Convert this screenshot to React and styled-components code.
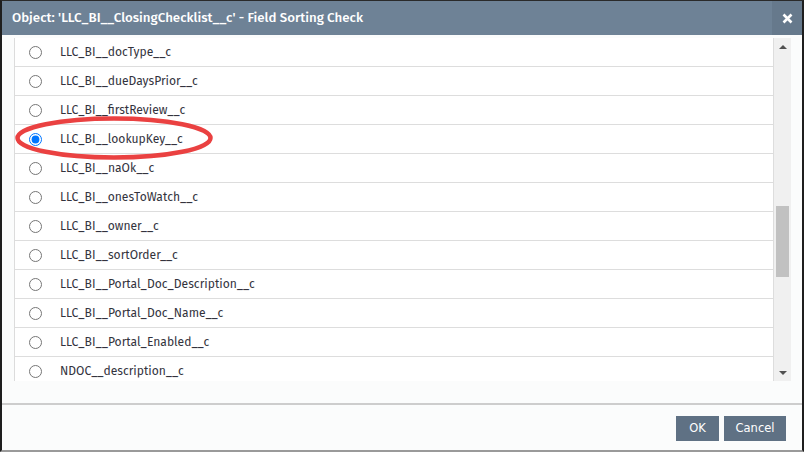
import React from "react";
import styled, { createGlobalStyle } from "styled-components";

const Global = createGlobalStyle`
  html, body { margin: 0; padding: 0; background: #ffffff; }
  body { width: 804px; height: 452px; overflow: hidden; }
`;

const Dialog = styled.div`
  position: relative;
  box-sizing: border-box;
  width: 804px;
  height: 452px;
  display: flex;
  flex-direction: column;
  border-top: 1px solid #2a2a2a;
  border-left: 2px solid #1e1e1e;
  border-right: 2px solid #1e1e1e;
  border-bottom: 2px solid #9a9a9a;
  background: #fbfcfc;
`;

const Header = styled.div`
  display: flex;
  align-items: stretch;
  height: 34px;
  background: #6e8296;
  flex-shrink: 0;
`;

const Title = styled.div`
  flex: 1;
  display: flex;
  align-items: center;
  padding-left: 10px;
  color: #ffffff;
  font-family: "Fira Sans", "Roboto", "Noto Sans", sans-serif;
  font-weight: 500;
  font-size: 13.3px;
`;

const CloseButton = styled.div`
  width: 30px;
  display: flex;
  align-items: center;
  justify-content: center;
  background: #66798c;
`;

const Body = styled.div`
  flex: 1;
  display: flex;
  flex-direction: column;
  padding: 3px 11px 0 12px;
`;

const ListFrame = styled.div`
  display: flex;
  height: 343px;
  background: #ffffff;
`;

const List = styled.div`
  flex: 1;
  overflow: hidden;
  border-left: 1px solid #dcdcdc;
`;

const Row = styled.label`
  display: flex;
  align-items: center;
  box-sizing: border-box;
  height: 29px;
  border-bottom: 1px solid #dddddd;
  padding-left: 14px;
  font-family: "Fira Sans", "Roboto", "Noto Sans", sans-serif;
  font-size: 12.1px;
  color: #33333d;
`;

const Radio = styled.input`
  margin: 0 18px 0 0;
  width: 13px;
  height: 13px;
  accent-color: #0075ff;
`;

const Scrollbar = styled.div`
  width: 17px;
  border-left: 1px solid #dddddd;
  background: #f0f0f0;
  display: flex;
  flex-direction: column;
  align-items: center;
`;

const Arrow = styled.div`
  height: 17px;
  width: 17px;
  display: flex;
  align-items: center;
  justify-content: center;
  &::after {
    content: "";
    width: 0;
    height: 0;
    border-left: 4px solid transparent;
    border-right: 4px solid transparent;
    ${(p) =>
      p.$down
        ? "border-top: 4px solid #505050;"
        : "border-bottom: 4px solid #505050;"}
  }
`;

const Track = styled.div`
  flex: 1;
  width: 100%;
  display: flex;
  flex-direction: column;
  align-items: center;
  padding-top: 151px;
  box-sizing: border-box;
`;

const Thumb = styled.div`
  width: 13px;
  height: 71px;
  background: #c1c1c1;
`;

const Footer = styled.div`
  height: 45px;
  border-top: 2px solid #cdcdcd;
  display: flex;
  align-items: center;
  justify-content: flex-end;
  gap: 5px;
  padding-right: 16px;
  flex-shrink: 0;
`;

const Button = styled.button`
  height: 25px;
  width: ${(p) => p.$w}px;
  padding: 0;
  border: none;
  background: #5f7184;
  color: #ffffff;
  font-family: "DejaVu Sans", Verdana, sans-serif;
  font-size: 11.5px;
  font-weight: 500;
  margin-top: 1px;
`;

const Highlight = styled.svg`
  position: absolute;
  left: 13px;
  top: 114px;
  pointer-events: none;
`;

const fields = [
  "LLC_BI__docType__c",
  "LLC_BI__dueDaysPrior__c",
  "LLC_BI__firstReview__c",
  "LLC_BI__lookupKey__c",
  "LLC_BI__naOk__c",
  "LLC_BI__onesToWatch__c",
  "LLC_BI__owner__c",
  "LLC_BI__sortOrder__c",
  "LLC_BI__Portal_Doc_Description__c",
  "LLC_BI__Portal_Doc_Name__c",
  "LLC_BI__Portal_Enabled__c",
  "NDOC__description__c",
];

export default function App() {
  return (
    <>
      <Global />
      <Dialog>
        <Header>
          <Title>Object: 'LLC_BI__ClosingChecklist__c' - Field Sorting Check</Title>
          <CloseButton>
            <svg width="11" height="11" viewBox="0 0 11 11">
              <path d="M1.5 1.5 L9.5 9.5 M9.5 1.5 L1.5 9.5" stroke="#fff" strokeWidth="2.6" />
            </svg>
          </CloseButton>
        </Header>
        <Body>
          <ListFrame>
            <List>
              {fields.map((f) => (
                <Row key={f}>
                  <Radio type="radio" name="field" defaultChecked={f === "LLC_BI__lookupKey__c"} />
                  {f}
                </Row>
              ))}
            </List>
            <Scrollbar>
              <Arrow />
              <Track>
                <Thumb />
              </Track>
              <Arrow $down />
            </Scrollbar>
          </ListFrame>
        </Body>
        <Footer>
          <Button $w={43}>OK</Button>
          <Button $w={62}>Cancel</Button>
        </Footer>
        <Highlight width="202" height="46" viewBox="0 0 202 46">
          <ellipse cx="99" cy="23" rx="96.5" ry="19.5" fill="none" stroke="#ea4141" strokeWidth="4.5" />
        </Highlight>
      </Dialog>
    </>
  );
}
